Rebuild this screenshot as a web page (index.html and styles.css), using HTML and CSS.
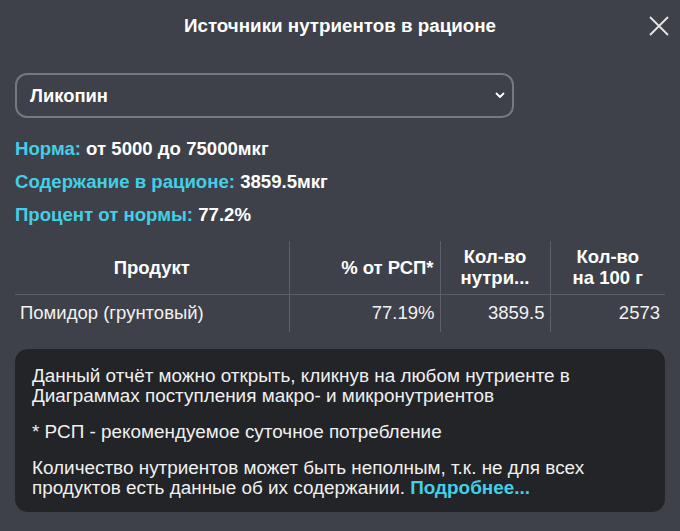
FILE: index.html
```html
<!DOCTYPE html>
<html lang="ru">
<head>
<meta charset="utf-8">
<title>Источники нутриентов в рационе</title>
<link rel="stylesheet" href="styles.css">
</head>
<body>
<div class="modal">
  <header class="modal-header">
    <span></span>
    <h1 class="modal-title">Источники нутриентов в рационе</h1>
    <button class="close-btn" aria-label="Закрыть">
      <svg width="22" height="22" viewBox="0 0 22 22"><path d="M2 2 L20 20 M20 2 L2 20" stroke="#e6e6e6" stroke-width="1.8" fill="none"/></svg>
    </button>
  </header>
  <div class="modal-body">
    <div class="select">
      <span class="select-value">Ликопин</span>
      <svg class="chevron" width="10" height="7" viewBox="0 0 10 7"><path d="M1.5 1.5 L5 5 L8.5 1.5" stroke="#ffffff" stroke-width="1.8" fill="none" stroke-linecap="round" stroke-linejoin="round"/></svg>
    </div>
    <div class="info">
      <div class="info-line"><span class="label">Норма:</span> от 5000 до 75000мкг</div>
      <div class="info-line"><span class="label">Содержание в рационе:</span> 3859.5мкг</div>
      <div class="info-line"><span class="label">Процент от нормы:</span> 77.2%</div>
    </div>
    <table class="table">
      <colgroup>
        <col class="w1"><col class="w2"><col class="w3"><col class="w4">
      </colgroup>
      <thead>
        <tr>
          <th class="c-name">Продукт</th>
          <th class="c-pct">% от РСП*</th>
          <th class="c-amt">Кол-во<br>нутри...</th>
          <th class="c-100">Кол-во<br>на 100 г</th>
        </tr>
      </thead>
      <tbody>
        <tr>
          <td class="c-name">Помидор (грунтовый)</td>
          <td class="c-num">77.19%</td>
          <td class="c-num">3859.5</td>
          <td class="c-num">2573</td>
        </tr>
      </tbody>
    </table>
    <div class="note">
      <p>Данный отчёт можно открыть, кликнув на любом нутриенте в Диаграммах поступления макро- и микронутриентов</p>
      <p>* РСП - рекомендуемое суточное потребление</p>
      <p>Количество нутриентов может быть неполным, т.к. не для всех продуктов есть данные об их содержании. <a class="more" href="#">Подробнее...</a></p>
    </div>
  </div>
</div>
</body>
</html>
```
FILE: styles.css
```css
html, body {
  margin: 0;
  padding: 0;
  background: #3e4149;
  color: #ffffff;
  font-family: "Liberation Sans", Arial, sans-serif;
}
.modal {
  width: 680px;
  height: 531px;
  overflow: hidden;
}
.modal-header {
  height: 52px;
  display: grid;
  grid-template-columns: 1fr auto 1fr;
  align-items: center;
}
.modal-title {
  margin: 0;
  font-size: 18.8px;
  font-weight: bold;
  color: #ffffff;
}
.close-btn {
  justify-self: end;
  margin-right: 10px;
  background: none;
  border: none;
  padding: 0;
  width: 22px;
  height: 22px;
  display: flex;
}
.modal-body {
  padding: 0 15px;
}
.select {
  margin-top: 21px;
  height: 45px;
  box-sizing: border-box;
  width: 499px;
  border: 2px solid #75787f;
  border-radius: 12px;
  display: flex;
  align-items: center;
  justify-content: space-between;
  padding: 0 7px 0 13px;
}
.select-value {
  font-size: 18.4px;
  font-weight: bold;
}
.info {
  margin-top: 14px;
}
.info-line {
  font-size: 18.6px;
  font-weight: bold;
  line-height: 33px;
}
.label {
  color: #43cfe6;
}
.table {
  margin-top: 10px;
  width: 650px;
  table-layout: fixed;
  border-collapse: collapse;
  font-size: 18.5px;
}
.w1 { width: 274px; }
.w2 { width: 151px; }
.w3 { width: 110px; }
.w4 { width: 115px; }
.table th {
  height: 53px;
  padding: 0 6px;
  font-weight: bold;
  line-height: 21px;
  border-bottom: 1px solid #5d6068;
  box-sizing: border-box;
}
.table td {
  height: 37px;
  padding: 0 5px;
  color: #f2f2f2;
}
.table th + th, .table td + td {
  border-left: 1px solid #5d6068;
}
.c-name { text-align: left; }
th.c-name { text-align: center; }
.c-pct { text-align: right; }
.c-amt { text-align: center; }
.c-100 { text-align: center; }
.c-num { text-align: right; }
.note {
  margin-top: 17px;
  background: #222428;
  border-radius: 13px;
  padding: 17px 17px 14px;
  font-size: 18.9px;
  line-height: 20px;
  color: #f0f0f0;
}
.note p {
  margin: 0 0 16px;
}
.note p:last-child {
  margin-bottom: 0;
}
.more {
  color: #43cfe6;
  font-weight: bold;
  text-decoration: none;
}
```
